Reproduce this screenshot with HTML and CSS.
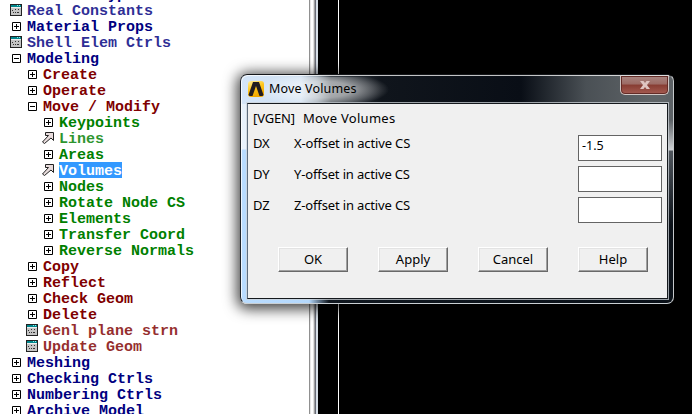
FILE: index.html
```html
<!DOCTYPE html>
<html lang="en">
<head>
<meta charset="utf-8">
<title>Move Volumes</title>
<link rel="stylesheet" href="styles.css">
</head>
<body>
<svg class="defs" aria-hidden="true">
  <symbol id="plus" viewBox="0 0 12 12"><path d="M2.5 2.5h8v8h-8zM4 6.5h5M6.5 4v5"/></symbol>
  <symbol id="minus" viewBox="0 0 12 12"><path d="M2.5 2.5h8v8h-8zM4 6.5h5"/></symbol>
  <symbol id="panel" viewBox="0 0 12 12">
    <path fill="#222" d="M0 0h12v12H0z"/><path fill="#c4c4c4" d="M1 1h10v10H1z"/><path fill="#00868b" d="M1 1h10v2H1z"/><path fill="#8ee" d="M7 1h1v1H7zM9 1h1v1H9z"/><path fill="#eee" d="M1 3h10v1H1z"/>
    <path fill="#333" d="M2 6h1v1H2zM5 5h1v1H5zM8 5h1v1H8zM3 8h1v1H3zM5 8h1v1H5zM7 8h2v1H7z"/>
  </symbol>
  <symbol id="arrow" viewBox="0 0 12 12"><path d="M3.5 .5h8v8L9 6 2.5 11.5.5 10 6.500 3.500H3.500z"/></symbol>
</svg>
<main class="screen">
  <nav class="tree">
    <div class="row navy"><svg class="box"><use href="#plus"/></svg><span>Element Type</span></div>
    <div class="row navy leaf"><svg><use href="#panel"/></svg><span>Real Constants</span></div>
    <div class="row navy"><svg class="box"><use href="#plus"/></svg><span>Material Props</span></div>
    <div class="row navy leaf"><svg><use href="#panel"/></svg><span>Shell Elem Ctrls</span></div>
    <div class="row navy"><svg class="box"><use href="#minus"/></svg><span>Modeling</span></div>
    <div class="row red l1"><svg class="box"><use href="#plus"/></svg><span>Create</span></div>
    <div class="row red l1"><svg class="box"><use href="#plus"/></svg><span>Operate</span></div>
    <div class="row red l1"><svg class="box"><use href="#minus"/></svg><span>Move / Modify</span></div>
    <div class="row green l2"><svg class="box"><use href="#plus"/></svg><span>Keypoints</span></div>
    <div class="row green l2 leaf"><svg class="arrow"><use href="#arrow"/></svg><span>Lines</span></div>
    <div class="row green l2"><svg class="box"><use href="#plus"/></svg><span>Areas</span></div>
    <div class="row green l2 selected"><svg class="arrow"><use href="#arrow"/></svg><span>Volumes</span></div>
    <div class="row green l2"><svg class="box"><use href="#plus"/></svg><span>Nodes</span></div>
    <div class="row green l2"><svg class="box"><use href="#plus"/></svg><span>Rotate Node CS</span></div>
    <div class="row green l2"><svg class="box"><use href="#plus"/></svg><span>Elements</span></div>
    <div class="row green l2"><svg class="box"><use href="#plus"/></svg><span>Transfer Coord</span></div>
    <div class="row green l2"><svg class="box"><use href="#plus"/></svg><span>Reverse Normals</span></div>
    <div class="row red l1"><svg class="box"><use href="#plus"/></svg><span>Copy</span></div>
    <div class="row red l1"><svg class="box"><use href="#plus"/></svg><span>Reflect</span></div>
    <div class="row red l1"><svg class="box"><use href="#plus"/></svg><span>Check Geom</span></div>
    <div class="row red l1"><svg class="box"><use href="#plus"/></svg><span>Delete</span></div>
    <div class="row red l1 leaf"><svg><use href="#panel"/></svg><span>Genl plane strn</span></div>
    <div class="row red l1 leaf"><svg><use href="#panel"/></svg><span>Update Geom</span></div>
    <div class="row navy"><svg class="box"><use href="#plus"/></svg><span>Meshing</span></div>
    <div class="row navy"><svg class="box"><use href="#plus"/></svg><span>Checking Ctrls</span></div>
    <div class="row navy"><svg class="box"><use href="#plus"/></svg><span>Numbering Ctrls</span></div>
    <div class="row navy"><svg class="box"><use href="#plus"/></svg><span>Archive Model</span></div>
  </nav>
  <div class="splitter"></div>
  <div class="canvas"></div>
</main>

<section class="dialog">
  <header class="titlebar">
    <svg class="logo" viewBox="0 0 16 16"><defs><linearGradient id="gold" x2=".4" y2="1"><stop stop-color="#fff0a0"/><stop offset=".5" stop-color="#ffc61c"/><stop offset="1" stop-color="#f0a800"/></linearGradient></defs><rect width="16" height="16" rx="3" fill="url(#gold)"/><path fill="#211d20" d="M5 1h6l4.500 13-1 1h-3L8 5 4.500 15h-3l-1-1z"/></svg>
    <span class="title">Move Volumes</span>
    <span class="close"><svg viewBox="0 0 10 8"><path d="M0 0h3.500L5 2l1.500-2H10L7 4l3 4H6.500L5 6 3.500 8H0l3-4z"/></svg></span>
  </header>
  <div class="client">
    <div class="command"><span>[VGEN]</span><span class="name">Move Volumes</span></div>
    <div class="field"><span class="key">DX</span><span class="label">X-offset in active CS</span><span class="input">-1.5</span></div>
    <div class="field"><span class="key">DY</span><span class="label">Y-offset in active CS</span><span class="input"></span></div>
    <div class="field"><span class="key">DZ</span><span class="label">Z-offset in active CS</span><span class="input"></span></div>
    <div class="actions"><span class="button">OK</span><span class="button">Apply</span><span class="button">Cancel</span><span class="button">Help</span></div>
  </div>
</section>
</body>
</html>
```
FILE: styles.css
```css
* { box-sizing: border-box; }
body { margin: 0; width: 692px; height: 414px; overflow: hidden; background: #000; }
.defs { position: absolute; width: 0; height: 0; }
.screen { display: flex; height: 414px; overflow: hidden; }

.tree {
  width: 309px; flex: none; margin-top: -14px; background: #fff;
  font: bold 15px/20px "Liberation Mono", monospace;
}
.row { display: flex; height: 16px; padding-left: 10px; white-space: pre; }
.row span { height: 16px; }
.row svg { width: 12px; height: 12px; margin: 2px 5px 0 0; flex: none; }
.row .box { fill: none; stroke: #000; stroke-width: 1; }
.row .arrow { fill: #e8dcdc; stroke: #222; }
.l1 { padding-left: 26px; }
.l2 { padding-left: 42px; }
.navy { color: #000080; }
.red { color: #800000; }
.green { color: #008000; }
.leaf span { opacity: .82; }
.selected span { background: #3399ff; color: #fff; }

.splitter {
  width: 9px; flex: none;
  background: linear-gradient(90deg, #909090 0 1px, #e6e6e6 1px 2px, #fff 2px 4px, #e0e0e0 4px 5px, #a0a0a0 5px 6px, #696c78 6px 7px, #d8e0e8 7px 9px);
}
.canvas { flex: 1; background: linear-gradient(90deg, #000 20px, #fff 20px 21px, #000 21px); }

.dialog {
  position: absolute; left: 240px; top: 74px; width: 434px; height: 230px;
  padding: 2px 6px 5px 6px;
  border: 1px solid; border-color: #15171a #c5c8ca #c9cfd3 #20242a;
  border-radius: 7px;
  box-shadow: 0 2px 14px 3px rgba(0, 0, 0, .75), inset 1px 1px 0 rgba(255, 255, 255, .75);
  background:
    linear-gradient(#5d6266 0, #5d6266 45px, #d0d3d6 75px, #50565d 76px, #0b1118 150px) right / 7px 100% no-repeat,
    linear-gradient(90deg, #d4e5f8 0, #d0e0f1 60px, #98a4af 76px, #40474e 90px, #10151c 140px, #090e16 280px, #4a5055 345px, #5f6467 410px) top / 100% 29px no-repeat,
    linear-gradient(90deg, #b9dcff 0, #b4d8fc 68px, #10171f 88px, #091018 100%) bottom / 100% 8px no-repeat,
    linear-gradient(#e4effa 0, #eaf3fc 74px, #b9dcff 75px);
  font: 13px/16px "Noto Sans", sans-serif; color: #000;
}
.titlebar { display: flex; height: 26px; padding-left: 1px; }
.logo { width: 16px; height: 16px; margin-top: 4px; }
.title {
  height: 25px; padding: 3px 0 0 5px; width: 134px; white-space: nowrap;
  font-size: 12.500px; letter-spacing: .15px; line-height: 18px;
  background: radial-gradient(ellipse 66px 18px at 44% 50%, rgba(255,255,255,.6) 0, rgba(255,255,255,.52) 45%, rgba(255,255,255,.25) 75%, transparent 100%);
}
.close {
  margin: -2px -2px 0 auto; width: 49px; height: 20px;
  display: flex; align-items: center; justify-content: center;
  border: 1px solid #d0c6c4; border-top-color: #ddd; border-radius: 0 0 5px 5px;
  box-shadow: inset 0 0 0 1px #642c27;
  background: linear-gradient(#a88580 0, #9c6a64 45%, #873c32 50%, #a55c52 100%);
}
.close svg { width: 10px; height: 8px; fill: #dfc4c0; }

.client {
  height: 196px; margin-right: -1px; padding: 6px 5px 0 5px;
  border: 1px solid; border-color: #15191d #15191d #15191d #5d6d7e;
  box-shadow: 0 0 0 1px rgba(205, 211, 216, .75);
  background: #f0f0f0;
}
.command { display: flex; gap: 8px; height: 24px; letter-spacing: -.15px; }
.name { letter-spacing: .28px; }
.field { display: flex; height: 31px; }
.key { width: 41px; padding-top: 1px; letter-spacing: -.2px; }
.label { width: 284px; flex: none; padding-top: 1px; letter-spacing: -.15px; }
.input { width: 84px; flex: none; height: 26px; margin-top: 1px; padding: 2px 3px; border: 1px solid #646464; background: #fff; font-size: 12.500px; }
.actions { display: flex; gap: 30px; padding: 20px 0 0 25px; }
.button {
  width: 70px; height: 25px; text-align: center; line-height: 22px;
  border: 1px solid; border-color: #fff #696969 #696969 #fff;
  box-shadow: inset -1px -1px #a0a0a0, inset 1px 1px #e3e3e3;
}
```
